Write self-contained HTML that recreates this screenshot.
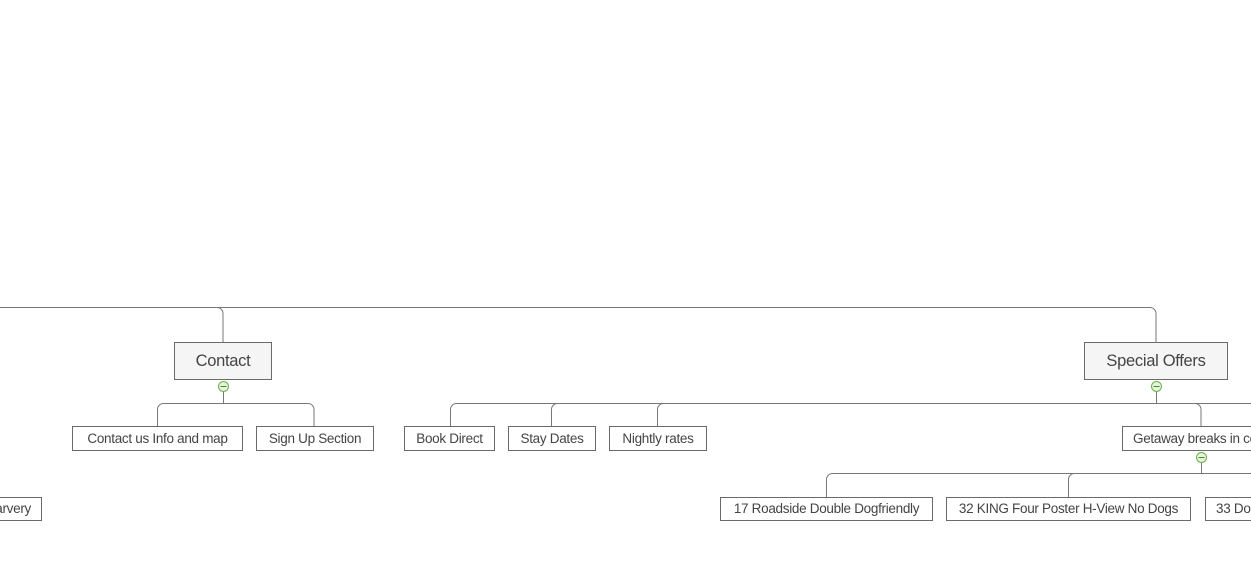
<!DOCTYPE html>
<html><head><style>
body{margin:0;width:1251px;height:574px;background:#fff;position:relative;overflow:hidden;font-family:"Liberation Sans","DejaVu Sans",sans-serif;color:#444}
.b{position:absolute;box-sizing:border-box;border:1px solid #6a6a6a;background:#fff;font-size:13.5px;text-align:center;white-space:nowrap;overflow:hidden;letter-spacing:-0.3px}
.s{height:25px;line-height:23px;top:426px}
.t{height:24px;line-height:22px;top:497px}
.m{height:38px;line-height:36px;top:342px;background:#f5f5f5;font-size:16.5px}
svg{position:absolute;left:0;top:0}
</style></head><body>
<svg width="1251" height="574" fill="none" stroke="#777" stroke-width="1">
<path d="M0 307.5H217a6 6 0 0 1 6 6V342"/>
<path d="M217 307.5H1150a6 6 0 0 1 6 6V342"/>
<path d="M223.5 391V403.5"/>
<path d="M157.5 426V409.5a6 6 0 0 1 6-6H308a6 6 0 0 1 6 6V426"/>
<path d="M1156.5 391V403.5"/>
<path d="M450.5 426V409.5a6 6 0 0 1 6-6H1251"/>
<path d="M551.5 426V409.5a6 6 0 0 1 6-6"/>
<path d="M657.5 426V409.5a6 6 0 0 1 6-6"/>
<path d="M1195 403.5a6 6 0 0 1 6 6V426"/>
<path d="M1201.5 462V473.5"/>
<path d="M826.5 497V479.5a6 6 0 0 1 6-6H1251"/>
<path d="M1068.5 497V479.5a6 6 0 0 1 6-6"/>
<g stroke="#6ab04c" fill="#e4f3da"><circle cx="223.5" cy="386.5" r="5"/><circle cx="1156.5" cy="386.5" r="5"/><circle cx="1201.5" cy="457.5" r="5"/></g>
<g stroke="#4a8a2c"><path d="M220.5 386.5h6M1153.5 386.5h6M1198.5 457.5h6"/></g>
</svg>
<div class="b m" style="left:174px;width:98px">Contact</div>
<div class="b m" style="left:1084px;width:144px">Special Offers</div>
<div class="b s" style="left:72px;width:171px">Contact us Info and map</div>
<div class="b s" style="left:256px;width:118px">Sign Up Section</div>
<div class="b s" style="left:404px;width:91px">Book Direct</div>
<div class="b s" style="left:508px;width:88px">Stay Dates</div>
<div class="b s" style="left:609px;width:98px">Nightly rates</div>
<div class="b s" style="left:1122px;width:160px;text-align:left;padding-left:10px">Getaway breaks in country</div>
<div class="b t" style="left:-60px;width:102px;text-align:right;padding-right:10px">Carvery</div>
<div class="b t" style="left:720px;width:213px">17 Roadside Double Dogfriendly</div>
<div class="b t" style="left:946px;width:245px">32 KING Four Poster H-View No Dogs</div>
<div class="b t" style="left:1205px;width:120px;text-align:left;padding-left:10px">33 Double Dogs</div>
</body></html>
